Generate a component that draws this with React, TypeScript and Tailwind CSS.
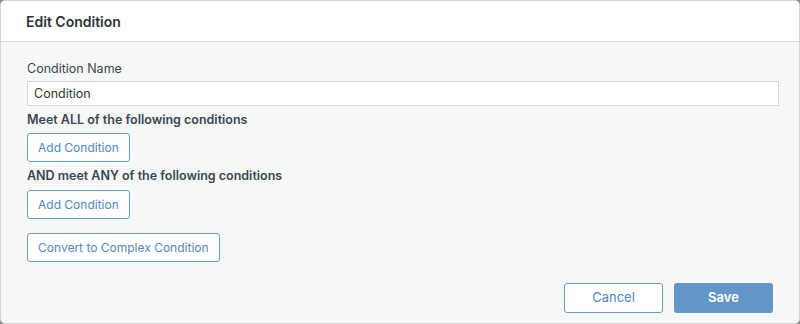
export default function App(): JSX.Element {
  return (
    <div className="w-[800px] h-[324px] bg-[#8a8a8a] font-['Inter',sans-serif]">
      <div className="w-full h-full flex flex-col rounded-[5px] overflow-hidden border border-[#d4d4d4] bg-[#f6f8f8]">
        <div className="h-[41px] shrink-0 bg-white border-b border-[#d8d8d8] flex items-center px-[25px]">
          <h2 className="text-[14px] font-semibold text-[#2d3339]">Edit Condition</h2>
        </div>
        <div className="flex-1 flex flex-col pl-[26px] pr-[20px] pt-[19px]">
          <label className="text-[12.5px] text-[#3a4654] leading-[16px]">Condition Name</label>
          <input
            className="mt-[4px] h-[25px] w-full border border-[#d6d6d6] bg-white px-[6px] text-[12.5px] text-[#333] outline-none"
            defaultValue="Condition"
          />
          <div className="mt-[6px] text-[12.5px] font-semibold text-[#3a4654] leading-[16px]">Meet ALL of the following conditions</div>
          <button className="mt-[5px] self-start h-[29px] px-[10px] rounded-[3px] border border-[#6a9bd0] bg-white text-[12px] text-[#4f86c4]">
            Add Condition
          </button>
          <div className="mt-[6px] text-[12.5px] font-semibold text-[#3a4654] leading-[16px]">AND meet ANY of the following conditions</div>
          <button className="mt-[6px] self-start h-[29px] px-[10px] rounded-[3px] border border-[#6a9bd0] bg-white text-[12px] text-[#4f86c4]">
            Add Condition
          </button>
          <button className="mt-[14px] self-start h-[29px] px-[10px] rounded-[3px] border border-[#6a9bd0] bg-white text-[12px] text-[#4f86c4]">
            Convert to Complex Condition
          </button>
          <div className="mt-[21px] flex justify-end gap-[11px] pr-[6px]">
            <button className="w-[99px] h-[30px] rounded-[3px] border border-[#6a9bd0] bg-white text-[13px] text-[#4f86c4]">
              Cancel
            </button>
            <button className="w-[99px] h-[30px] rounded-[3px] bg-[#6495c9] text-[13px] font-semibold text-white">
              Save
            </button>
          </div>
        </div>
      </div>
    </div>
  )
}
